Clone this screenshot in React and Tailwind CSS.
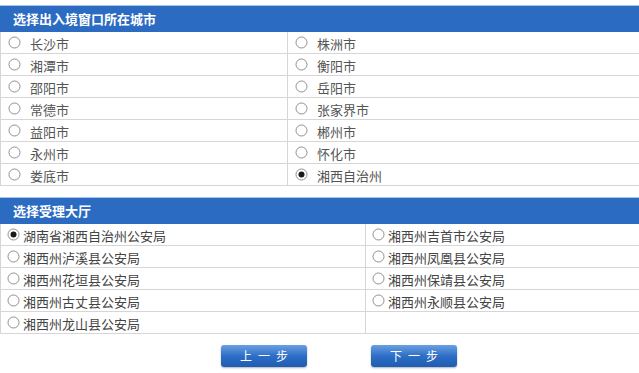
import React from 'react';

const cities = [
    ['长沙市', '株洲市'],
    ['湘潭市', '衡阳市'],
    ['邵阳市', '岳阳市'],
    ['常德市', '张家界市'],
    ['益阳市', '郴州市'],
    ['永州市', '怀化市'],
    ['娄底市', '湘西自治州'],
];

const halls = [
    ['湖南省湘西自治州公安局', '湘西州吉首市公安局'],
    ['湘西州泸溪县公安局', '湘西州凤凰县公安局'],
    ['湘西州花垣县公安局', '湘西州保靖县公安局'],
    ['湘西州古丈县公安局', '湘西州永顺县公安局'],
    ['湘西州龙山县公安局', null],
];

const Radio = ({ checked }) => (
    <svg width="13" height="13" viewBox="0 0 13 13" className="shrink-0">
        <circle cx="6.5" cy="6.5" r="5.5" fill="#fff" stroke="#8f8f8f" strokeWidth="1" />
        {checked && <circle cx="6.5" cy="6.5" r="3" fill="#1a1a1a" />}
    </svg>
);

const Header = ({ children }) => (
    <div className="h-[27px] bg-[#2b6bc2] border-t border-[#a9c6ec] flex items-center pl-[13px] text-white font-bold text-[13px]">
        {children}
    </div>
);

const StepButton = ({ children }) => (
    <button className="w-[86px] h-[22px] rounded-[3px] pl-[6px] bg-gradient-to-b from-[#6aa0e2] via-[#2d6ec6] to-[#1f5cb2] text-white text-[12px] tracking-[6px] shadow-[0_1px_2px_rgba(0,0,0,0.3)]">
        {children}
    </button>
);

const App = () => {
    const selectedCity = '湘西自治州';
    const selectedHall = '湖南省湘西自治州公安局';

    return (
        <div className="w-[639px] h-[373px] bg-white pt-[5px] overflow-hidden" style={{ fontFamily: '"Noto Sans CJK SC", "Liberation Sans", sans-serif' }}>
            <Header>选择出入境窗口所在城市</Header>
            <div className="border-l border-[#d6d6d6] grid grid-cols-[287px_1fr]">
                {cities.flat().map((c, i) => (
                    <div
                        key={c}
                        className={`h-[22px] border-b border-[#d6d6d6] flex items-center pl-[7px] gap-[9px] text-[13px] text-[#555] ${i % 2 === 0 ? 'border-r' : ''}`}
                    >
                        <Radio checked={c === selectedCity} />
                        <span className="pt-[2px]">{c}</span>
                    </div>
                ))}
            </div>

            <div className="mt-[11px]">
                <Header>选择受理大厅</Header>
            </div>
            <div className="border-l border-[#d6d6d6] grid grid-cols-[365px_1fr]">
                {halls.flat().map((h, i) => (
                    <div
                        key={i}
                        className={`h-[22px] border-b border-[#d6d6d6] flex items-center pl-[6px] gap-[3px] text-[13px] text-[#444] ${i % 2 === 0 ? 'border-r' : ''}`}
                    >
                        {h && <Radio checked={h === selectedHall} />}
                        {h && <span className="pt-[2px]">{h}</span>}
                    </div>
                ))}
            </div>

            <div className="flex pl-[221px] gap-[64px] mt-[11px]">
                <StepButton>上一步</StepButton>
                <StepButton>下一步</StepButton>
            </div>
        </div>
    );
};

export default App;
